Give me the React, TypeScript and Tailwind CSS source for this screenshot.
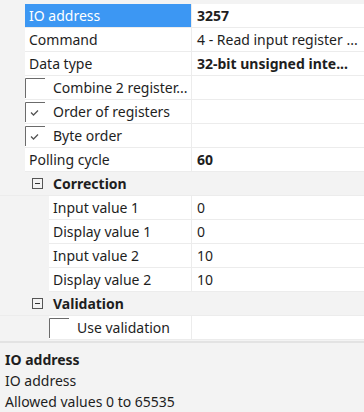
import React from "react";

type Row =
  | { kind: "prop"; name: string; value?: string; bold?: boolean; selected?: boolean; indent?: boolean; check?: "on" | "off" }
  | { kind: "cat"; name: string };

const rows: Row[] = [
  { kind: "prop", name: "IO address", value: "3257", bold: true, selected: true },
  { kind: "prop", name: "Command", value: "4 - Read input register ..." },
  { kind: "prop", name: "Data type", value: "32-bit unsigned inte...", bold: true },
  { kind: "prop", name: "Combine 2 register...", check: "off" },
  { kind: "prop", name: "Order of registers", check: "on" },
  { kind: "prop", name: "Byte order", check: "on" },
  { kind: "prop", name: "Polling cycle", value: "60", bold: true },
  { kind: "cat", name: "Correction" },
  { kind: "prop", name: "Input value 1", value: "0", indent: true },
  { kind: "prop", name: "Display value 1", value: "0", indent: true },
  { kind: "prop", name: "Input value 2", value: "10", indent: true },
  { kind: "prop", name: "Display value 2", value: "10", indent: true },
  { kind: "cat", name: "Validation" },
  { kind: "prop", name: "Use validation", check: "off", indent: true },
];

function CheckBox({ on }: { on: boolean }) {
  return (
    <svg width="20" height="20" viewBox="0 0 20 20" className="shrink-0">
      <path d="M0.5 20 V0.5 H20" fill="none" stroke="#6b6b6b" strokeWidth="1" />
      <path d="M6 10.5 L8.5 13 L13 8.5" fill="none" stroke={on ? "#555" : "none"} strokeWidth="1.3" />
    </svg>
  );
}

function Collapse() {
  return (
    <svg width="11" height="11" viewBox="0 0 11 11" className="shrink-0">
      <rect x="0.5" y="0.5" width="10" height="10" fill="none" stroke="#555" />
      <path d="M3 5.5 H8" stroke="#333" />
    </svg>
  );
}

export default function App() {
  return (
    <div
      className="w-[364px] h-[412px] bg-[#f3f3f3] text-[14px] text-[#1e1e1e] flex flex-col overflow-hidden"
      style={{ fontFamily: '"Noto Sans", "Open Sans", sans-serif' }}
    >
      <div className="pt-[4px] h-[342px]">
        {rows.map((r) =>
          r.kind === "cat" ? (
            <div key={r.name} className="h-[24px] flex items-center border-b border-[#ececec]">
              <div className="w-[32px]" />
              <Collapse />
              <span className="ml-[10px] font-bold">{r.name}</span>
            </div>
          ) : (
            <div key={r.name} className="h-[24px] flex">
              <div className={r.indent ? "w-[49px] shrink-0" : "w-[25px] shrink-0"} />
              <div
                className={
                  "flex-1 flex items-center border-b border-r border-[#ececec] whitespace-nowrap overflow-hidden " +
                  (r.selected ? "bg-[#3c97f3] text-white" : "bg-white")
                }
              >
                {r.check ? (
                  <>
                    <CheckBox on={r.check === "on"} />
                    <span className="ml-[8px]">{r.name}</span>
                  </>
                ) : (
                  <span className={r.indent ? "ml-[4px]" : "ml-[4px]"}>{r.name}</span>
                )}
              </div>
              <div className="w-[172px] shrink-0 bg-white flex items-center border-b border-[#ececec] pl-[5px] whitespace-nowrap overflow-hidden">
                <span className={r.bold ? "font-bold" : ""}>{r.value ?? ""}</span>
              </div>
            </div>
          )
        )}
      </div>
      <div className="border-t-2 border-[#e3e3e3] px-[5px] pt-[6px] leading-[21px]">
        <div className="font-bold">IO address</div>
        <div>IO address</div>
        <div>Allowed values 0 to 65535</div>
      </div>
    </div>
  );
}
